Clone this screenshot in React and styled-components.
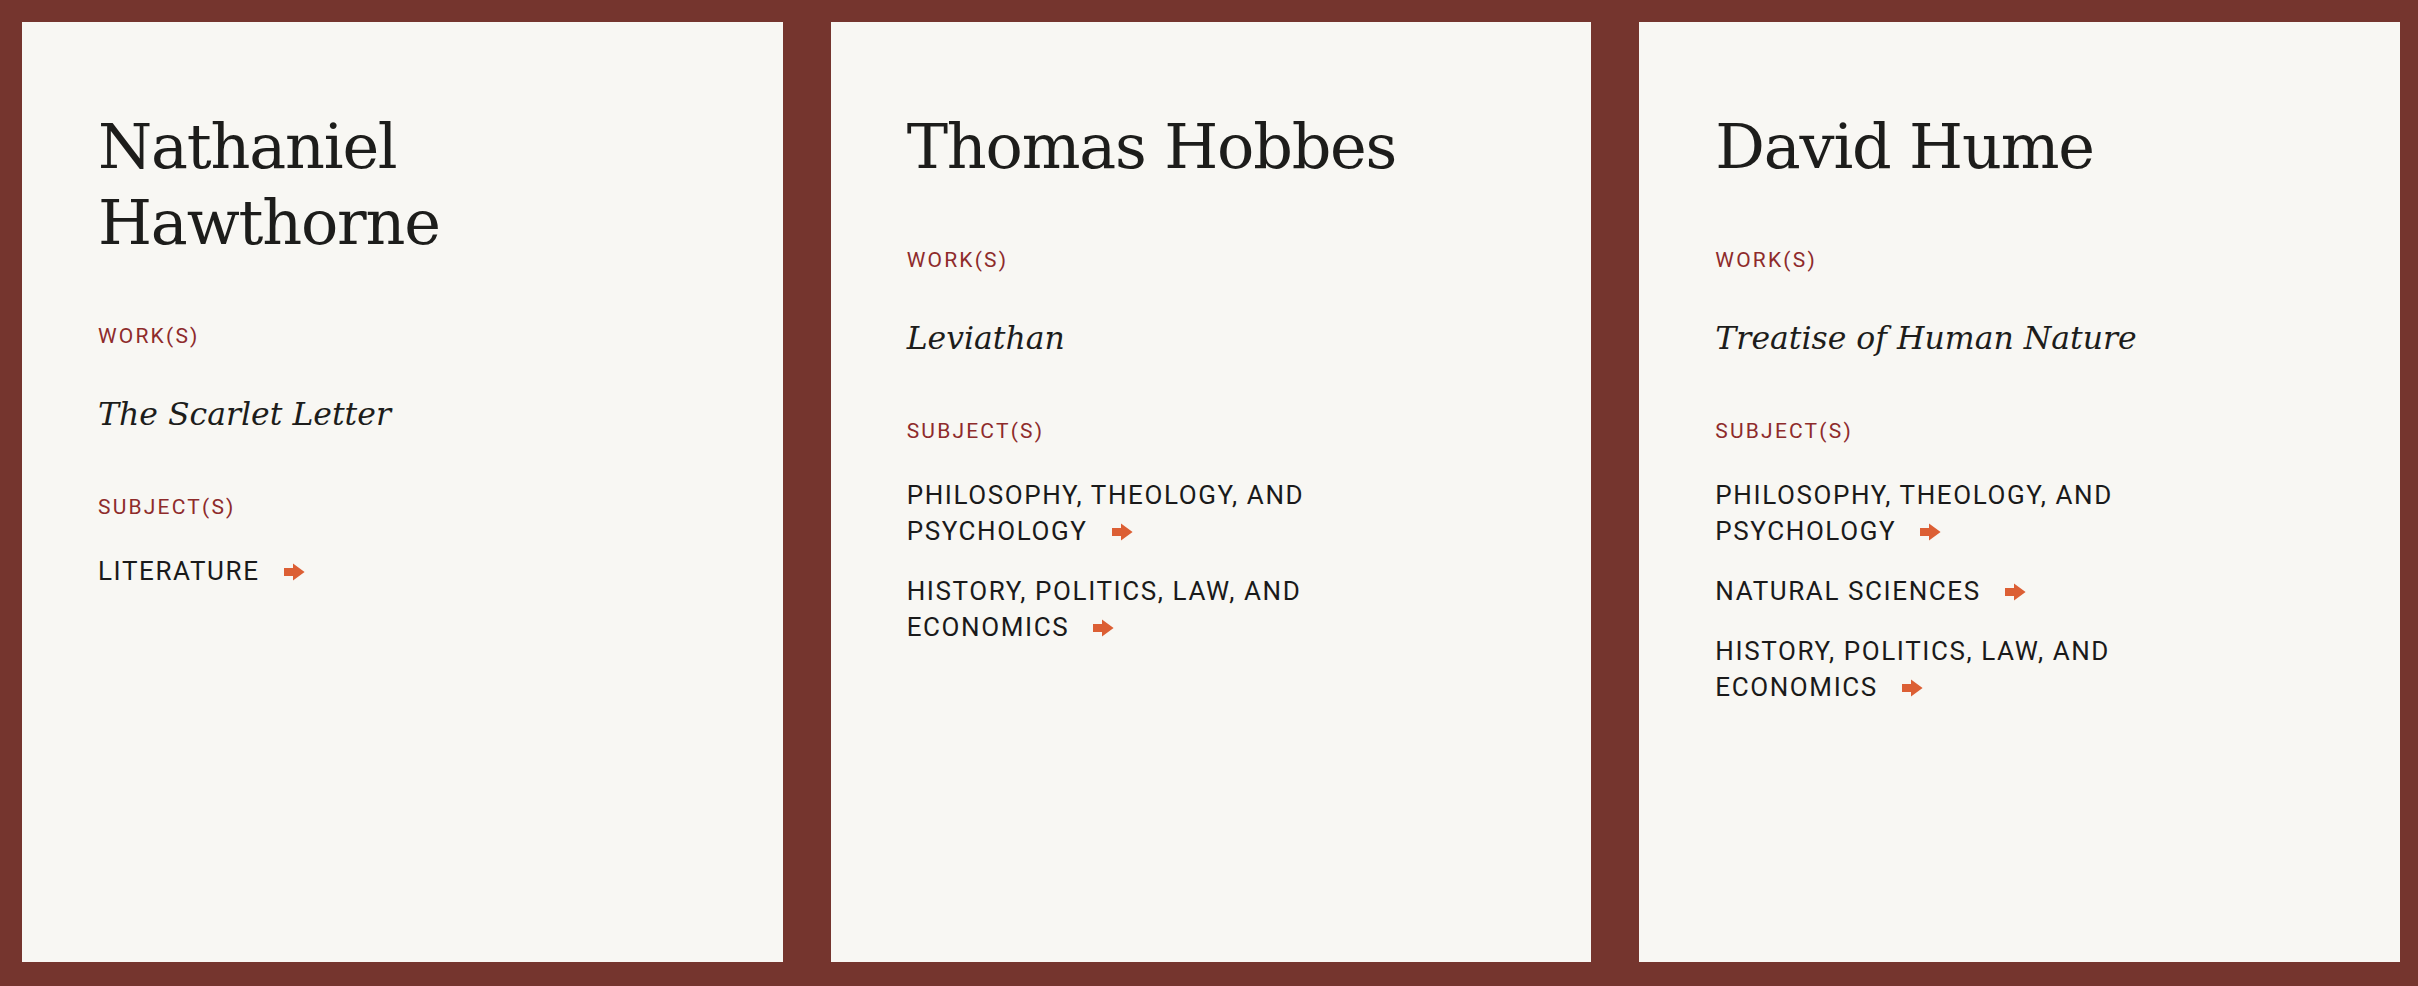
import React from "react";
import styled, { createGlobalStyle } from "styled-components";

const Global = createGlobalStyle`
  html, body { margin: 0; padding: 0; background: #75352e; }
  * { box-sizing: border-box; }
`;

const Page = styled.main`
  display: grid;
  grid-template-columns: repeat(3, 1fr);
  column-gap: 48px;
  height: 986px;
  padding: 22px 18px 24px 22px;
  background: #75352e;
`;

const Card = styled.article`
  background: #f8f7f3;
  padding: 87px 76px 40px 76px;
  display: flex;
  flex-direction: column;
  align-items: flex-start;
`;

const Name = styled.h2`
  margin: 0 0 61px 0;
  font-family: "DejaVu Serif", "Liberation Serif", serif;
  font-weight: 400;
  font-size: 62px;
  line-height: 76px;
  letter-spacing: -1.2px;
  color: #1d1d1b;
`;

const Label = styled.h3`
  margin: 0 0 ${(p) => p.$after}px 0;
  font-family: Roboto, "Liberation Sans", sans-serif;
  font-weight: 400;
  font-size: 21px;
  line-height: 28px;
  letter-spacing: 2.2px;
  text-transform: uppercase;
  color: #8e2b2b;
`;

const Work = styled.p`
  margin: -1px 0 59px 0;
  font-family: "DejaVu Serif", "Liberation Serif", serif;
  font-style: italic;
  font-size: 31.5px;
  line-height: 40px;
  letter-spacing: 0;
  color: #1d1d1b;
`;

const Subjects = styled.ul`
  list-style: none;
  margin: 0;
  padding: 0;
  display: flex;
  flex-direction: column;
  gap: 24px;
  max-width: 480px;
`;

const Subject = styled.li`
  font-family: Roboto, "Liberation Sans", sans-serif;
  font-size: 26px;
  line-height: 36px;
  letter-spacing: 1.6px;
  text-transform: uppercase;
  color: #1a1a1a;
`;

const ArrowIcon = styled.svg`
  width: 21px;
  height: 18px;
  margin-left: 24px;
  vertical-align: -1px;
  fill: #dc5f34;
`;

const Arrow = () => (
  <ArrowIcon viewBox="0 0 21 18" aria-hidden="true">
    <path d="M0 5 H9 V0.5 L20.6 9 L9 17.5 V13 H0 Z" />
  </ArrowIcon>
);

const authors = [
  {
    name: "Nathaniel Hawthorne",
    work: "The Scarlet Letter",
    subjects: ["Literature"],
  },
  {
    name: "Thomas Hobbes",
    work: "Leviathan",
    subjects: [
      "Philosophy, Theology, and Psychology",
      "History, Politics, Law, and Economics",
    ],
  },
  {
    name: "David Hume",
    work: "Treatise of Human Nature",
    subjects: [
      "Philosophy, Theology, and Psychology",
      "Natural Sciences",
      "History, Politics, Law, and Economics",
    ],
  },
];

export default function App() {
  return (
    <>
      <Global />
      <Page>
        {authors.map((a) => (
          <Card key={a.name}>
            <Name>{a.name}</Name>
            <Label $after={45}>Work(s)</Label>
            <Work>{a.work}</Work>
            <Label $after={32}>Subject(s)</Label>
            <Subjects>
              {a.subjects.map((s) => (
                <Subject key={s}>
                  {s}
                  <Arrow />
                </Subject>
              ))}
            </Subjects>
          </Card>
        ))}
      </Page>
    </>
  );
}
